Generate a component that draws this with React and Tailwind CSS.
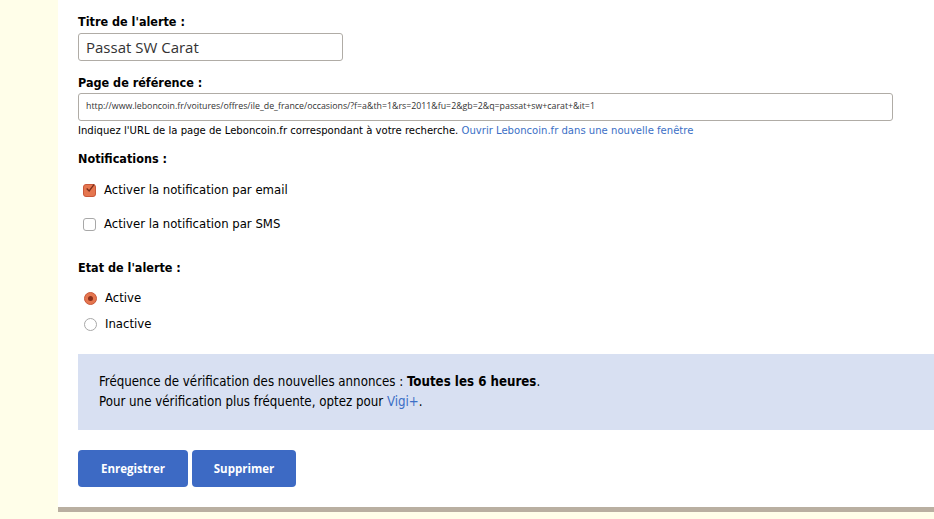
import React from 'react';

const label = 'h-[14px] text-[12.5px] font-bold text-black leading-[14px]';
const row = 'flex h-[14px] items-center gap-[8px] text-[13px] leading-[14px]';

const Checkbox = ({ checked }) => (
  <span
    className={`inline-flex h-[13px] w-[13px] shrink-0 items-center justify-center rounded-[3px] border ${
      checked ? 'border-[#c9583a] bg-[#e5764f]' : 'border-[#a8a8a8] bg-white'
    }`}
  >
    {checked && (
      <svg viewBox="0 0 12 12" className="h-[11px] w-[11px] -mt-[3px] ml-[1px]">
        <path d="M2 6 L5 9 L11 1" fill="none" stroke="#7a2e1a" strokeWidth="1.6" />
      </svg>
    )}
  </span>
);

const Radio = ({ checked }) => (
  <span
    className={`inline-flex h-[13px] w-[13px] shrink-0 items-center justify-center rounded-full border ${
      checked ? 'border-[#c9583a] bg-[#e5764f]' : 'border-[#a8a8a8] bg-white'
    }`}
  >
    {checked && <span className="h-[5px] w-[5px] rounded-full bg-[#8a2f1a]" />}
  </span>
);

const AlertForm = () => {
  return (
    <div className="flex h-[507px] flex-col bg-white pl-[20px] pt-[15px] font-['DejaVu_Sans_Condensed','DejaVu_Sans',sans-serif] text-black">
      <div className={label}>Titre de l'alerte :</div>
      <div className="mt-[4px] flex h-[28px] w-[265px] items-center rounded-[3px] border border-[#b0aca6] px-[7px] font-['Open_Sans',sans-serif] text-[15px] text-[#333]">
        Passat SW Carat
      </div>

      <div className={`mt-[15px] ${label}`}>Page de référence :</div>
      <div className="mt-[3px] flex h-[28px] w-[815px] items-center rounded-[3px] border border-[#b0aca6] px-[7px] font-['Open_Sans',sans-serif] text-[8.8px] text-[#333]">
        http://www.leboncoin.fr/voitures/offres/ile_de_france/occasions/?f=a&amp;th=1&amp;rs=2011&amp;fu=2&amp;gb=2&amp;q=passat+sw+carat+&amp;it=1
      </div>
      <p className="mt-[3px] h-[14px] text-[11.2px] leading-[14px]">
        Indiquez l'URL de la page de Leboncoin.fr correspondant à votre recherche.{' '}
        <a className="text-[#3b6fc6]">Ouvrir Leboncoin.fr dans une nouvelle fenêtre</a>
      </p>

      <div className={`mt-[14px] ${label}`}>Notifications :</div>
      <label className={`mt-[17px] ml-[5px] ${row}`}>
        <Checkbox checked />
        Activer la notification par email
      </label>
      <label className={`mt-[20px] ml-[5px] ${row}`}>
        <Checkbox />
        Activer la notification par SMS
      </label>

      <div className={`mt-[30px] ${label}`}>Etat de l'alerte :</div>
      <label className={`mt-[16px] ml-[6px] ${row}`}>
        <Radio checked />
        Active
      </label>
      <label className={`mt-[12px] ml-[6px] ${row}`}>
        <Radio />
        Inactive
      </label>

      <div className="mt-[23px] flex h-[76px] flex-col justify-center bg-[#d8e0f2] pl-[21px] text-[13.2px] leading-[20px]">
        <p>
          Fréquence de vérification des nouvelles annonces : <b>Toutes les 6 heures</b>.
        </p>
        <p>
          Pour une vérification plus fréquente, optez pour <a className="text-[#3b6fc6]">Vigi+</a>.
        </p>
      </div>

      <div className="mt-[20px] flex gap-[4px] font-['Open_Sans',sans-serif]">
        <button className="h-[37px] w-[110px] rounded-[4px] bg-[#3d6ac4] text-[11.5px] font-bold text-white">
          Enregistrer
        </button>
        <button className="h-[37px] w-[104px] rounded-[4px] bg-[#3d6ac4] text-[11.5px] font-bold text-white">
          Supprimer
        </button>
      </div>
    </div>
  );
};

export default function App() {
  return (
    <div className="h-[519px] w-[934px] overflow-hidden bg-[#fffee9]">
      <div className="ml-[58px]">
        <AlertForm />
        <div className="h-[5px] bg-[#b9afa1]" />
      </div>
    </div>
  );
}
